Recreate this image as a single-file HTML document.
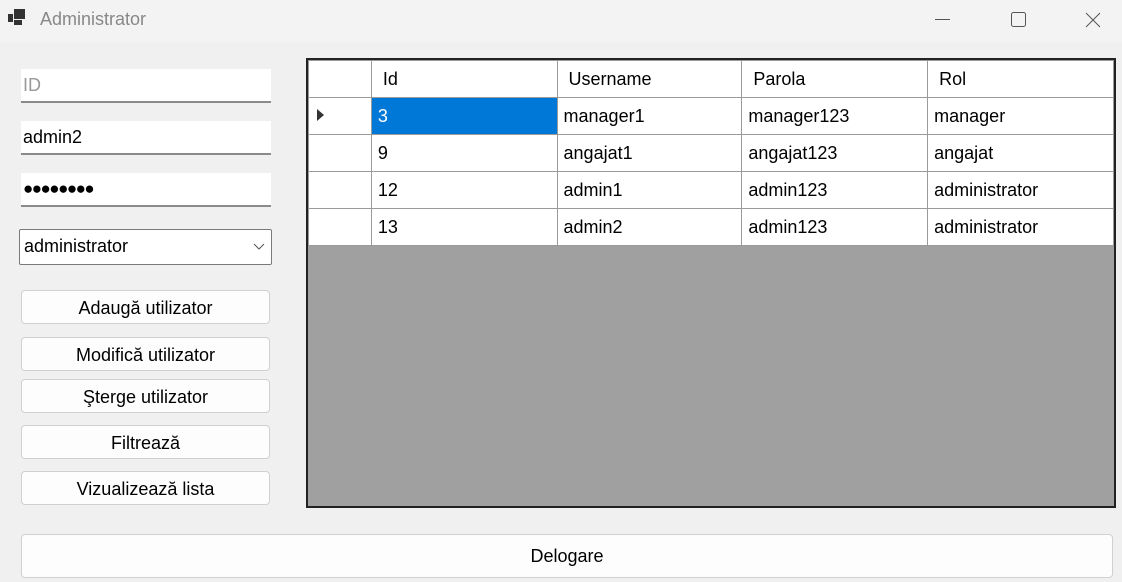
<!DOCTYPE html>
<html><head><meta charset="utf-8"><style>
*{box-sizing:border-box;margin:0;padding:0}
body{width:1122px;height:582px;background:#f0f0f0;font-family:"Liberation Sans",sans-serif;position:relative;overflow:hidden;color:#000}
.title{position:absolute;left:0;top:0;width:1122px;height:42px;background:#f3f3f3}
.abs{position:absolute}
.tb{position:absolute;left:21px;width:250px;height:34px;background:#fff;border-bottom:2px solid #8a8a8a;font-size:18px;padding:6px 0 0 2px}
.btn{position:absolute;left:21px;width:249px;height:34px;background:#fdfdfd;border:1px solid #d0d0d0;border-radius:4px;font-size:18px;text-align:center;line-height:34px}
.grid{position:absolute;left:306px;top:58px;width:810px;height:450px;background:#a0a0a0;border:2px solid #222}
table{border-collapse:collapse;background:#fff;font-size:18px}
td{border:1px solid #9a9a9a;height:37px;padding:0 0 0 6px;vertical-align:middle}
</style></head><body>
<div class="title">
<svg class="abs" style="left:8px;top:9px" width="20" height="18"><rect x="0" y="5" width="5" height="8" fill="#333"/><rect x="6" y="0" width="11" height="10" fill="#333"/><rect x="6" y="11" width="8" height="5" fill="#333"/></svg>
<div class="abs" style="left:40px;top:9px;font-size:18px;color:#888">Administrator</div>
<svg class="abs" style="left:930px;top:10px" width="180" height="20"><line x1="5" y1="9.5" x2="20" y2="9.5" stroke="#555" stroke-width="1"/><rect x="81.5" y="2.5" width="14" height="14" rx="2" fill="none" stroke="#555" stroke-width="1"/><path d="M156 3 L170 17 M170 3 L156 17" stroke="#555" stroke-width="1"/></svg>
</div>
<div class="tb" style="top:69px;color:#999">ID</div>
<div class="tb" style="top:121px">admin2</div>
<div class="tb" style="top:173px;font-size:17px;padding-top:6px;letter-spacing:-1.5px">●●●●●●●●</div>
<div class="abs" style="left:19px;top:229px;width:253px;height:36px;background:#fff;border:1px solid #7a7a7a;border-radius:2px;font-size:18px;padding:6px 0 0 4px">administrator
<svg class="abs" style="right:6px;top:13px" width="12" height="8"><path d="M1 1 L6 6 L11 1" fill="none" stroke="#555"/></svg></div>
<div class="btn" style="top:290px">Adaugă utilizator</div>
<div class="btn" style="top:337px">Modifică utilizator</div>
<div class="btn" style="top:379px">Şterge utilizator</div>
<div class="btn" style="top:425px">Filtrează</div>
<div class="btn" style="top:471px">Vizualizează lista</div>
<div class="btn" style="top:534px;width:1092px;height:44px;line-height:42px">Delogare</div>
<div class="grid">
<table>
<tr><td style="width:63px;height:36px"></td><td style="width:186px;padding-left:11px">Id</td><td style="width:185px;padding-left:11px">Username</td><td style="width:186px;padding-left:11px">Parola</td><td style="width:186px;padding-left:11px">Rol</td></tr>
<tr><td><svg width="10" height="14"><path d="M2 1 L9 7 L2 13Z" fill="#333"/></svg></td><td style="background:#0078d7;color:#fff">3</td><td>manager1</td><td>manager123</td><td>manager</td></tr>
<tr><td></td><td>9</td><td>angajat1</td><td>angajat123</td><td>angajat</td></tr>
<tr><td></td><td>12</td><td>admin1</td><td>admin123</td><td>administrator</td></tr>
<tr><td></td><td>13</td><td>admin2</td><td>admin123</td><td>administrator</td></tr>
</table>
</div>
</body></html>
